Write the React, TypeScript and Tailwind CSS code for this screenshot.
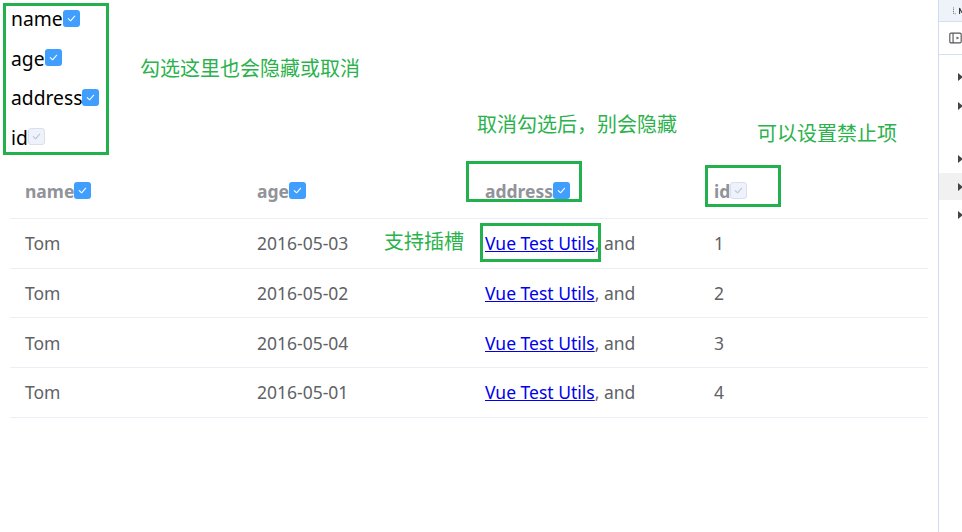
const columns = [
  { key: "name", label: "name", checked: true, disabled: false },
  { key: "age", label: "age", checked: true, disabled: false },
  { key: "address", label: "address", checked: true, disabled: false },
  { key: "id", label: "id", checked: true, disabled: true },
]

const rows = [
  { name: "Tom", date: "2016-05-03", id: 1 },
  { name: "Tom", date: "2016-05-02", id: 2 },
  { name: "Tom", date: "2016-05-04", id: 3 },
  { name: "Tom", date: "2016-05-01", id: 4 },
]

function Check({ disabled }: { disabled?: boolean }) {
  return (
    <span
      className={
        disabled
          ? "inline-flex h-[17px] w-[17px] shrink-0 items-center justify-center rounded-[3px] border border-[#dcdfe6] bg-[#edf2fc]"
          : "inline-flex h-[17px] w-[17px] shrink-0 items-center justify-center rounded-[3px] bg-[#409eff]"
      }
    >
      <svg viewBox="0 0 12 12" className="h-[11px] w-[11px]" fill="none">
        <path
          d="M2.5 6.2 L5 8.5 L9.5 3.5"
          stroke={disabled ? "#c0c4cc" : "#ffffff"}
          strokeWidth="1.2"
          strokeLinecap="round"
          strokeLinejoin="round"
        />
      </svg>
    </span>
  )
}

function Note({ className, children }: { className: string; children: React.ReactNode }) {
  return (
    <div
      className={`absolute whitespace-nowrap text-[20px] leading-none text-[#2bb24c] ${className}`}
    >
      {children}
    </div>
  )
}

function Box({ className }: { className: string }) {
  return <div className={`absolute border-[3px] border-[#22b14c] ${className}`} />
}

export default function App() {
  return (
    <div
      className="flex h-[532px] w-[962px] overflow-hidden bg-white"
      style={{ fontFamily: '"Noto Sans", "Noto Sans CJK SC", sans-serif' }}
    >
      <div className="relative flex-1">
        {/* column toggles */}
        <div className="pl-[11px] text-[19.3px] text-black">
          {columns.map((c) => (
            <div key={c.key} className="flex h-[39.5px] items-center">
              <span>{c.label}</span>
              <span className="mb-[5px]">
                <Check disabled={c.disabled} />
              </span>
            </div>
          ))}
        </div>

        {/* table */}
        <div className="ml-[10px] mt-[11px] w-[918px] text-[17.5px]">
          <div className="grid h-[50px] grid-cols-[232px_228px_229px_229px] border-b border-[#ebeef5]">
            {columns.map((c) => (
              <div key={c.key} className="flex items-center pb-[4px] pl-[15px]">
                <span className="font-bold text-[#909399]">{c.label}</span>
                <span className="mb-[5px]">
                  <Check disabled={c.disabled} />
                </span>
              </div>
            ))}
          </div>
          {rows.map((r) => (
            <div
              key={r.id}
              className="grid h-[49.7px] grid-cols-[232px_228px_229px_229px] items-center border-b border-[#ebeef5] text-[#606266]"
            >
              <div className="pl-[15px]">{r.name}</div>
              <div className="pl-[15px]">{r.date}</div>
              <div className="pl-[15px]">
                <a href="#" className="text-[#0000ee] underline">
                  Vue Test Utils
                </a>
                , and
              </div>
              <div className="pl-[15px]">{r.id}</div>
            </div>
          ))}
        </div>

        {/* annotations */}
        <Box className="left-[3px] top-[3px] h-[152px] w-[106px]" />
        <Note className="left-[140px] top-[59px]">勾选这里也会隐藏或取消</Note>
        <Note className="left-[477px] top-[115px]">取消勾选后，别会隐藏</Note>
        <Note className="left-[757px] top-[124px]">可以设置禁止项</Note>
        <Note className="left-[384px] top-[232px]">支持插槽</Note>
        <Box className="left-[466px] top-[161px] h-[41px] w-[116px]" />
        <Box className="left-[705px] top-[165px] h-[42px] w-[76px]" />
        <Box className="left-[480px] top-[223px] h-[39px] w-[121px]" />
      </div>

      {/* devtools edge */}
      <div className="flex w-[24px] shrink-0 flex-col border-l border-[#cddcf0] bg-white">
        <div className="flex h-[22px] items-center gap-[2px] overflow-hidden border-b border-[#d6dfec] bg-[#eef3fa] pl-[14px]">
          <svg width="6" height="14" viewBox="0 0 6 14">
            {[1, 4, 7, 10].map((y) => (
              <rect key={y} x="0" y={y} width="1.5" height="1.5" fill="#555" />
            ))}
            <rect x="3" y="11" width="1.5" height="1.5" fill="#555" />
          </svg>
          <svg width="6" height="12" viewBox="0 0 6 12">
            <path d="M1 11V1l4 8" stroke="#333" strokeWidth="1.8" fill="none" />
          </svg>
        </div>
        <div className="flex h-[33px] items-center border-b border-[#d6dfec] pl-[10px]">
          <svg width="16" height="16" viewBox="0 0 16 16" fill="none">
            <rect x="1" y="2" width="14" height="12" rx="1.5" stroke="#555" strokeWidth="1.4" />
            <path d="M5 2v12" stroke="#555" strokeWidth="1.4" />
            <path d="M8.5 8h3M10 6.5 11.5 8 10 9.5" stroke="#555" strokeWidth="1.2" />
          </svg>
        </div>
        <div className="relative flex-1">
          <div className="absolute left-0 right-0 top-[118px] h-[27px] bg-[#f1f1f1]" />
          {[73, 102, 155, 183, 211].map((y) => (
            <div
              key={y}
              className="absolute left-[19px] h-0 w-0 border-y-[4px] border-l-[5px] border-y-transparent border-l-[#444]"
              style={{ top: y - 55 }}
            />
          ))}
        </div>
      </div>
    </div>
  )
}
